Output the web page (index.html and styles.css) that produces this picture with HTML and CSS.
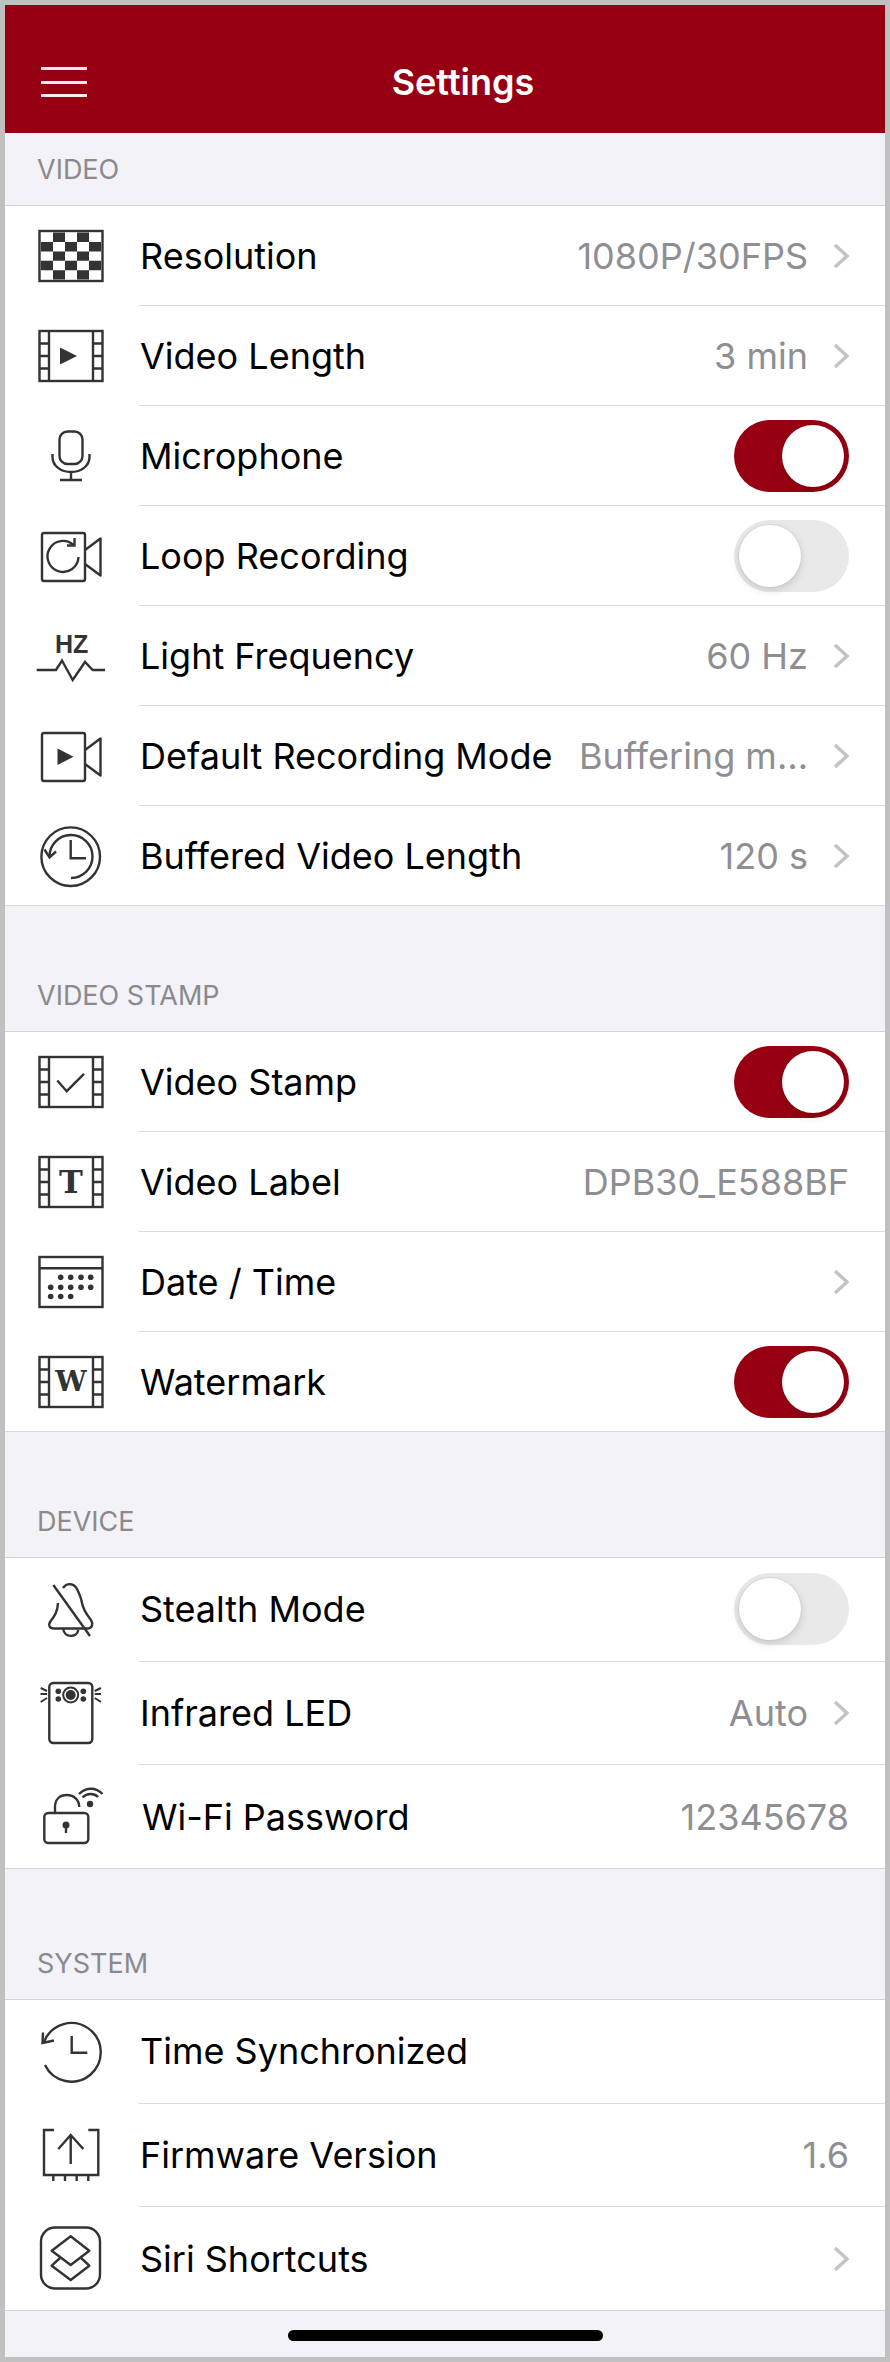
FILE: index.html
```html
<!DOCTYPE html>
<html lang="en">
<head>
  <meta charset="UTF-8" />
  <meta name="viewport" content="width=device-width, initial-scale=1.0"/>
  <title>Settings</title>
  <link rel="stylesheet" href="styles.css">
</head>
<body>
  <svg class="sprite" xmlns="http://www.w3.org/2000/svg">
    <symbol id="film" viewBox="0 0 70 70">
      <rect x="3.5" y="10" width="63" height="50"/>
      <path d="M13 10V60M57 10V60M3.5 22.5H13M3.5 35H13M3.5 47.5H13M57 22.5H66.5M57 35H66.5M57 47.5H66.5"/>
    </symbol>
    <symbol id="camera" viewBox="0 0 70 70">
      <rect x="6" y="12" width="43" height="48" rx="2"/>
      <path d="M49 29L64.5 17.500V54.500L49 43" stroke-linejoin="round"/>
    </symbol>
    <symbol id="chevron" viewBox="0 0 16 26">
      <path d="M2 2L14 13L2 24"/>
    </symbol>
  </svg>

  <div class="screen">
    <header class="topbar">
      <div class="menu-btn"><span></span><span></span><span></span></div>
      <h1>Settings</h1>
    </header>

    <div class="group-title first">VIDEO</div>
    <section class="group">
      <div class="row">
        <svg class="icon" viewBox="0 0 70 70">
          <use href="#film-none"/>
          <rect x="3.5" y="10" width="63" height="50"/>
          <path class="solid" d="M17 11.600h12v9.400H17zM41 11.600h12v9.400H41zM5 21h12v9.400H5zM29 21h12v9.400H29zM53 21h12v9.400H53zM17 30.400h12v9.400H17zM41 30.400h12v9.400H41zM5 39.800h12v9.400H5zM29 39.800h12v9.400H29zM53 39.800h12v9.400H53zM17 49.200h12v9.400H17zM41 49.200h12v9.400H41z"/>
        </svg>
        <div class="row-body"><span class="label">Resolution</span><span class="value">1080P/30FPS</span><svg class="chevron"><use href="#chevron"/></svg></div>
      </div>
      <div class="row">
        <svg class="icon" viewBox="0 0 70 70">
          <use href="#film"/>
          <path class="solid" d="M24 26.500L41 35L24 43.500Z"/>
        </svg>
        <div class="row-body"><span class="label">Video Length</span><span class="value">3 min</span><svg class="chevron"><use href="#chevron"/></svg></div>
      </div>
      <div class="row">
        <svg class="icon" viewBox="0 0 70 70">
          <rect x="23.500" y="10.500" width="23" height="32.500" rx="8"/>
          <path d="M16.500 33V36C16.500 45 25 51 35 51C45 51 53.500 45 53.500 36V33M35 51V59M24 59H46"/>
        </svg>
        <div class="row-body"><span class="label">Microphone</span><span class="toggle on"><i></i></span></div>
      </div>
      <div class="row">
        <svg class="icon" viewBox="0 0 70 70">
          <use href="#camera"/>
          <path d="M37.500 24A15.500 15.500 0 1 0 42.500 36"/>
          <path d="M31 24.500H38.500V17"/>
        </svg>
        <div class="row-body"><span class="label">Loop Recording</span><span class="toggle"><i></i></span></div>
      </div>
      <div class="row">
        <svg class="icon" viewBox="0 0 70 70">
          <text class="hz" x="35.700" y="31.700">HZ</text>
          <path d="M0.700 49H20L26 39.500L36.700 59L49 41L56.700 49H69"/>
        </svg>
        <div class="row-body"><span class="label">Light Frequency</span><span class="value">60 Hz</span><svg class="chevron"><use href="#chevron"/></svg></div>
      </div>
      <div class="row">
        <svg class="icon" viewBox="0 0 70 70">
          <use href="#camera"/>
          <path class="solid" d="M21.500 27.500L37.500 35.700L21.500 44Z"/>
        </svg>
        <div class="row-body"><span class="label">Default Recording Mode</span><span class="value">Buffering m…</span><svg class="chevron"><use href="#chevron"/></svg></div>
      </div>
      <div class="row">
        <svg class="icon" viewBox="0 0 70 70">
          <circle cx="34.700" cy="35.700" r="29.300"/>
          <path d="M13.500 36A21.500 21.500 0 1 1 35 57"/>
          <path d="M8.500 28.500L13.500 36.500L20 30.500"/>
          <path d="M34.700 19V37.300H50"/>
        </svg>
        <div class="row-body"><span class="label">Buffered Video Length</span><span class="value">120 s</span><svg class="chevron"><use href="#chevron"/></svg></div>
      </div>
    </section>

    <div class="group-title">VIDEO STAMP</div>
    <section class="group">
      <div class="row">
        <svg class="icon" viewBox="0 0 70 70">
          <use href="#film"/>
          <path d="M21.300 33.500L30.700 44.200L48 26.800"/>
        </svg>
        <div class="row-body"><span class="label">Video Stamp</span><span class="toggle on"><i></i></span></div>
      </div>
      <div class="row">
        <svg class="icon" viewBox="0 0 70 70">
          <use href="#film"/>
          <text class="glyph" x="35" y="46.200">T</text>
        </svg>
        <div class="row-body"><span class="label">Video Label</span><span class="value plain">DPB30_E588BF</span></div>
      </div>
      <div class="row">
        <svg class="icon" viewBox="0 0 70 70">
          <rect x="3.500" y="10" width="63" height="50"/>
          <path d="M3.500 21.200H66.500"/>
          <g class="solid">
            <circle cx="24.700" cy="30.200" r="2.800"/><circle cx="34.700" cy="30.200" r="2.800"/><circle cx="45" cy="30.200" r="2.800"/><circle cx="54.700" cy="30.200" r="2.800"/>
            <circle cx="14.700" cy="40.200" r="2.800"/><circle cx="24.700" cy="40.200" r="2.800"/><circle cx="34.700" cy="40.200" r="2.800"/><circle cx="45" cy="40.200" r="2.800"/><circle cx="54.700" cy="40.200" r="2.800"/>
            <circle cx="14.700" cy="49.500" r="2.800"/><circle cx="24.700" cy="49.500" r="2.800"/><circle cx="34.700" cy="49.500" r="2.800"/>
          </g>
        </svg>
        <div class="row-body"><span class="label">Date / Time</span><svg class="chevron"><use href="#chevron"/></svg></div>
      </div>
      <div class="row">
        <svg class="icon" viewBox="0 0 70 70">
          <use href="#film"/>
          <text class="glyph wide" x="35" y="44.200">W</text>
        </svg>
        <div class="row-body"><span class="label">Watermark</span><span class="toggle on"><i></i></span></div>
      </div>
    </section>

    <div class="group-title">DEVICE</div>
    <section class="group tall">
      <div class="row">
        <svg class="icon" viewBox="0 0 70 70">
          <path d="M17.300 10L54 61"/>
          <path d="M27 13C31 7.500 38 8 41 14C44 20 45 22 46 28C47.500 36 52 41 55 45C57.500 49 56 53 52 53.500H18C13.500 53.500 12 50 14 47C17.500 42 21.500 38 22 28"/>
          <path d="M27.300 54C28 63 41 63 42.300 55"/>
        </svg>
        <div class="row-body"><span class="label">Stealth Mode</span><span class="toggle"><i></i></span></div>
      </div>
      <div class="row">
        <svg class="icon" viewBox="0 0 70 70">
          <rect x="13.300" y="5" width="43" height="60" rx="4"/>
          <circle cx="34.700" cy="17" r="7.500" class="thin"/>
          <g class="solid">
            <circle cx="34.700" cy="17" r="5"/>
            <circle cx="22.300" cy="13.300" r="2.800"/><circle cx="22.300" cy="21" r="2.800"/><circle cx="47.300" cy="13.300" r="2.800"/><circle cx="47.300" cy="21" r="2.800"/>
          </g>
          <path class="thin" d="M4.700 10L11 13M4.500 16H11M4.700 24L11 20M65 10L58.700 13M65 16H58.700M65 24L58.700 20"/>
        </svg>
        <div class="row-body"><span class="label">Infrared LED</span><span class="value">Auto</span><svg class="chevron"><use href="#chevron"/></svg></div>
      </div>
      <div class="row">
        <svg class="icon" viewBox="0 0 70 70">
          <rect x="8.300" y="31" width="44" height="30" rx="4"/>
          <path d="M19 31V25C19 17 24 13 31 13C38 13 43 18 43.300 25"/>
          <circle class="solid" cx="30" cy="43" r="3.500"/>
          <path d="M30 43V51"/>
          <circle class="solid" cx="54" cy="22" r="3.200"/>
          <path d="M46.500 15.500C51 11 58 11 62 15M43 12C50 5 60 5 66.500 12"/>
        </svg>
        <div class="row-body"><span class="label wifi">Wi-Fi Password</span><span class="value plain">12345678</span></div>
      </div>
    </section>

    <div class="group-title system">SYSTEM</div>
    <section class="group tall">
      <div class="row">
        <svg class="icon" viewBox="0 0 70 70">
          <path d="M8 25A29.300 29.300 0 1 1 9 48"/>
          <path d="M7 15.500L6.500 26L18 23.500"/>
          <path d="M35.700 19V35.800H51.300"/>
        </svg>
        <div class="row-body"><span class="label">Time Synchronized</span></div>
      </div>
      <div class="row">
        <svg class="icon" viewBox="0 0 70 70">
          <path d="M18 10H8V55H62.300V10H52.300"/>
          <path d="M17.300 55V61M29 55V61M40.700 55V61M52.300 55V61"/>
          <path d="M34.700 44V15M22.300 29L34.700 15L47.300 29"/>
        </svg>
        <div class="row-body"><span class="label">Firmware Version</span><span class="value plain">1.6</span></div>
      </div>
      <div class="row">
        <svg class="icon" viewBox="0 0 70 70">
          <rect x="5" y="3.500" width="59" height="61" rx="14"/>
          <path d="M34.700 12.300L53.300 26.700L34.700 41L15.700 26.700Z" stroke-linejoin="round"/>
          <path d="M24 34L15.700 41.700L34.700 56L53.300 41.700L45 34" stroke-linejoin="round"/>
        </svg>
        <div class="row-body"><span class="label">Siri Shortcuts</span><svg class="chevron"><use href="#chevron"/></svg></div>
      </div>
    </section>

    <footer class="home-area"><div class="home-bar"></div></footer>
  </div>
</body>
</html>
```

FILE: styles.css
```css
* {
  box-sizing: border-box;
}

body {
  margin: 0;
  padding: 5px;
  background: #c0c0c0;
  font-family: Inter, "Liberation Sans", sans-serif;
}

.sprite {
  display: none;
}

.screen {
  background: #f2f2f7;
  height: 2352px;
}

.topbar {
  height: 128px;
  padding: 26px 0 0 36px;
  background: #970012;
  color: #fff;
  display: grid;
  grid-template-columns: 1fr auto 1fr;
  align-items: center;
}

.topbar h1 {
  margin: 0;
  font-size: 36px;
  font-weight: 600;
  grid-column: 2;
  grid-row: 1;
}

.menu-btn {
  grid-column: 1;
  grid-row: 1;
  width: 46px;
  display: flex;
  flex-direction: column;
  gap: 10.500px;
}

.menu-btn span {
  height: 3px;
  background: #ffe9ee;
}

.group-title {
  height: 126px;
  padding: 0 0 19px 32px;
  display: flex;
  align-items: flex-end;
  font-size: 27px;
  color: #8a8a8e;
  border-bottom: 1px solid #d4d4d8;
}

.group-title.first {
  height: 73px;
}

.group-title.system {
  height: 131px;
}

.group {
  background: #fff;
}

.row {
  height: 100px;
  padding-left: 31px;
  display: flex;
  align-items: center;
}

.group.tall .row {
  height: 103.670px;
}

.row:last-child {
  border-bottom: 1px solid #d8d8dc;
}

.icon {
  flex: none;
  width: 70px;
  height: 70px;
  margin-right: 33px;
  fill: none;
  stroke: #333;
  stroke-width: 2.400px;
}

.icon use {
  fill: none;
}

.icon .solid {
  fill: #333;
  stroke: none;
}

.icon .thin {
  stroke-width: 2px;
}

.icon .hz {
  font: bold 25px "Liberation Sans", sans-serif;
  text-anchor: middle;
  fill: #333;
  stroke: none;
}

.icon .glyph {
  font: bold 32px "DejaVu Serif", serif;
  text-anchor: middle;
  fill: #333;
  stroke: none;
}

.icon .glyph.wide {
  font-size: 28px;
}

.row-body {
  flex: 1;
  align-self: stretch;
  min-width: 0;
  padding-right: 36px;
  display: flex;
  align-items: center;
  border-bottom: 1px solid #dcdcdf;
}

.row:last-child .row-body {
  border-bottom: none;
}

.label {
  flex: 1;
  padding-left: 1px;
  font-size: 36px;
  color: #000;
  white-space: nowrap;
}

.label.wifi {
  padding-left: 3px;
}

.value {
  font-size: 36px;
  color: #8e8e93;
  white-space: nowrap;
}

.chevron {
  flex: none;
  width: 16px;
  height: 26px;
  margin-left: 25px;
  fill: none;
  stroke: #c4c4c7;
  stroke-width: 3.600px;
}

.toggle {
  flex: none;
  width: 115px;
  height: 72px;
  padding: 5px;
  border-radius: 36px;
  background: #e9e9ea;
  display: flex;
}

.toggle i {
  width: 62px;
  height: 62px;
  border-radius: 50%;
  background: #fff;
  box-shadow: 0 3px 8px rgba(0, 0, 0, 0.15), 0 0 0 1px rgba(0, 0, 0, 0.04);
}

.toggle.on {
  background: #970012;
  justify-content: flex-end;
}

.home-area {
  height: 45px;
  padding-top: 19px;
  display: flex;
  justify-content: center;
}

.home-bar {
  width: 315px;
  height: 11px;
  border-radius: 6px;
  background: #000;
}
```
